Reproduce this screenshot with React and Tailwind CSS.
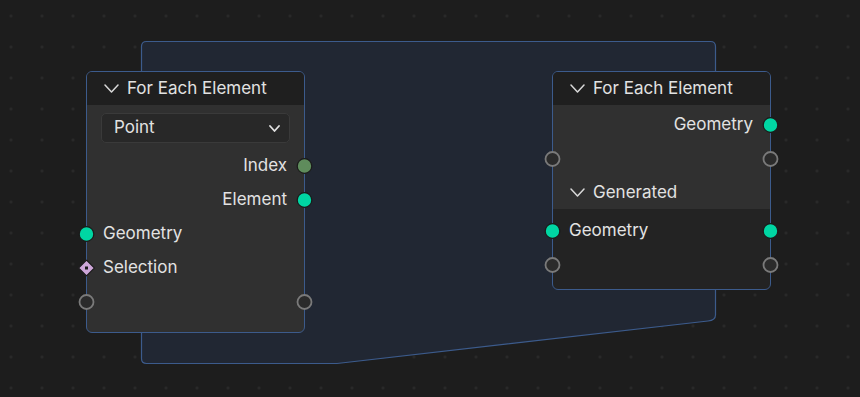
function Chevron({ w = 13, h = 7, sw = 1.5, className = '' }) {
  return (
    <svg width={w + 2} height={h + 2} viewBox={`0 0 ${w + 2} ${h + 2}`} className={className}>
      <polyline points={`1,1 ${w / 2 + 1},${h + 1} ${w + 1},1`} fill="none" stroke="currentColor" strokeWidth={sw} strokeLinecap="round" strokeLinejoin="round" />
    </svg>
  )
}

// sockets drawn as svg so the sizes are exact
function Socket({ kind = 'geo', side }) {
  const pos = side === 'left' ? 'left-[-9px]' : 'right-[-9px]'
  let shape
  if (kind === 'empty') {
    shape = <circle cx="8.5" cy="8.5" r="7" fill="#2b2b2b" stroke="#7a7a7a" strokeWidth="1.8" />
  } else if (kind === 'diamond') {
    shape = (
      <g>
        <polygon points="8.5,0.5 16.5,8.5 8.5,16.5 0.5,8.5" fill="#cda6d8" stroke="#1a1a1a" strokeWidth="1.2" />
        <rect x="7" y="7" width="3" height="3" fill="#1a1a1a" />
      </g>
    )
  } else {
    const fill = kind === 'int' ? '#5f8c5c' : '#00d6a3'
    shape = <circle cx="8.5" cy="8.5" r="7.3" fill={fill} stroke="#1a1a1a" strokeWidth="1.2" />
  }
  return (
    <svg width="17" height="17" viewBox="0 0 17 17" className={`absolute top-1/2 -translate-y-1/2 ${pos}`}>
      {shape}
    </svg>
  )
}

function Row({ label, left, right, align = 'left' }) {
  return (
    <div className={`relative h-[34px] flex items-center ${align === 'right' ? 'justify-end pr-[17px]' : 'pl-[16px]'}`}>
      {left && <Socket kind={left} side="left" />}
      {label && <span>{label}</span>}
      {right && <Socket kind={right} side="right" />}
    </div>
  )
}

function Header({ title }) {
  return (
    <div className="h-[33px] flex items-center pl-[17px] gap-[8px] bg-[#1f1f1f] rounded-t-[5px]">
      <Chevron className="text-[#d8d8d8]" />
      <span className="leading-none pb-[1px]">{title}</span>
    </div>
  )
}

export default function App() {
  return (
    <div className="relative w-[860px] h-[397px] overflow-hidden bg-[#1d1d1d] bg-[radial-gradient(circle,#2b2b2b_1px,transparent_1.6px)] bg-[size:31px_31px] bg-[position:-4.5px_0.5px] font-['Inter','Noto_Sans',sans-serif] text-[17px] text-[#e2e2e2]">
      <svg className="absolute inset-0" width="860" height="397">
        <path
          d="M146.5 41.5 H710.5 Q715.5 41.5 715.5 46.5 V315 Q715.5 320.3 708 321 L337 363.5 H146.5 Q141.5 363.5 141.5 358.5 V46.5 Q141.5 41.5 146.5 41.5 Z"
          fill="#212733"
          stroke="#3c5b8c"
          strokeWidth="1.2"
        />
      </svg>

      <div className="absolute left-[86px] top-[71px] w-[219px] h-[262px] rounded-[6px] border border-[#3c5b8c] bg-[#303030] flex flex-col">
        <Header title="For Each Element" />
        <div className="mx-[14px] mt-[8px] h-[30px] rounded-[5px] border border-[#3a3a3a] bg-[#282828] flex items-center justify-between pl-[12px] pr-[9px]">
          <span>Point</span>
          <Chevron w={9} h={5} sw={1.8} className="text-[#e0e0e0]" />
        </div>
        <div className="mt-[6px] flex flex-col">
          <Row label="Index" right="int" align="right" />
          <Row label="Element" right="geo" align="right" />
          <Row label="Geometry" left="geo" />
          <Row label="Selection" left="diamond" />
          <Row left="empty" right="empty" />
        </div>
      </div>

      <div className="absolute left-[552px] top-[71px] w-[219px] h-[219px] rounded-[6px] border border-[#3c5b8c] bg-[#232323] flex flex-col">
        <Header title="For Each Element" />
        <div className="bg-[#303030] pt-[3px] flex flex-col">
          <Row label="Geometry" right="geo" align="right" />
          <Row left="empty" right="empty" />
          <div className="h-[33px] flex items-center pl-[17px] gap-[8px]">
            <Chevron className="text-[#d8d8d8]" />
            <span className="leading-none pb-[1px]">Generated</span>
          </div>
        </div>
        <div className="pt-[5px] flex flex-col">
          <Row label="Geometry" left="geo" right="geo" />
          <Row left="empty" right="empty" />
        </div>
      </div>
    </div>
  )
}
